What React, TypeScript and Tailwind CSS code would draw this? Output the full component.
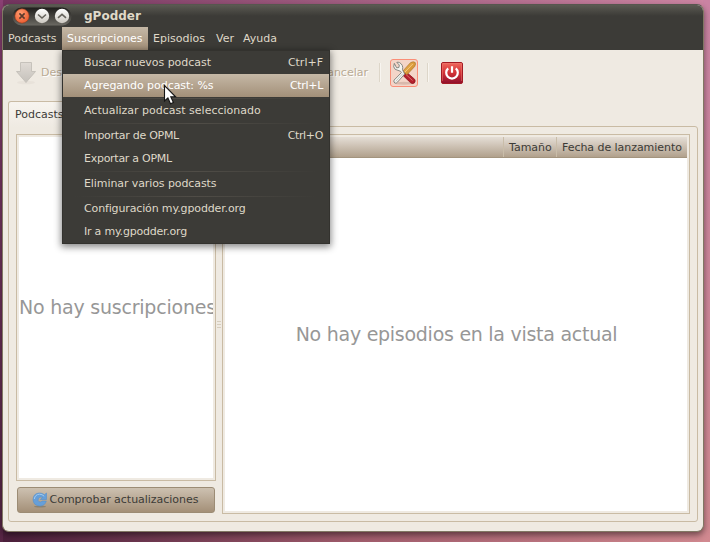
import type { ReactNode } from 'react';

function MenuTitle({ children, width, active = false }: { children: ReactNode; width: string; active?: boolean }) {
  return (
    <div
      className={`flex h-[23px] items-center px-[5px] ${width} ${
        active ? 'bg-linear-to-b from-[#c5b8a6] to-[#a39079] text-white' : 'text-[#dfd8c8]'
      }`}
    >
      {children}
    </div>
  );
}

type MenuItemProps = { label: string; shortcut?: string; active?: boolean; tracking?: string; shortcutTracking?: string };

function MenuItem({ label, shortcut, active = false, tracking = '', shortcutTracking = '' }: MenuItemProps) {
  return (
    <div
      className={`flex h-[23px] items-center justify-between pr-[6px] pl-[21px] ${
        active ? 'bg-linear-to-b from-[#c5b8a6] to-[#a39079] text-white' : 'text-[#dfd8c8]'
      }`}
    >
      <span className={tracking}>{label}</span>
      <span className={shortcutTracking}>{shortcut}</span>
    </div>
  );
}

function MenuSeparator() {
  return (
    <div className="h-[2px] pt-px">
      <div className="mx-3 h-px bg-linear-to-r from-transparent via-[#504d47] to-transparent" />
    </div>
  );
}

function WindowButtons() {
  return (
    <svg width="61" height="19" viewBox="0 0 61 19">
      <defs>
        <linearGradient id="pill" x1="0" y1="0" x2="0" y2="1">
          <stop offset="0" stopColor="#1e1d1b" />
          <stop offset="1" stopColor="#6c6a63" />
        </linearGradient>
        <linearGradient id="silver" x1="0" y1="0" x2="0" y2="1">
          <stop offset="0" stopColor="#ffffff" />
          <stop offset="1" stopColor="#cbc7bf" />
        </linearGradient>
        <radialGradient id="orange" cx=".4" cy=".3" r=".7">
          <stop offset="0" stopColor="#ff9c70" />
          <stop offset="1" stopColor="#ec5e32" />
        </radialGradient>
      </defs>
      <rect x="0.5" y="0.5" width="59" height="18" rx="9" fill="url(#pill)" />
      <circle cx="10" cy="9" r="7.2" fill="url(#orange)" stroke="#8a3a1e" strokeWidth=".6" />
      <circle cx="30" cy="9" r="7.2" fill="url(#silver)" />
      <circle cx="50" cy="9" r="7.2" fill="url(#silver)" />
      <path d="M7.4 6.4l5.2 5.2M12.6 6.4l-5.2 5.2" stroke="#5b3a2c" strokeWidth="1.6" />
      <path d="M26 7.5l4 3.5l4-3.5M46 10.8l4-3.5l4 3.5" fill="none" stroke="#65635c" strokeWidth="1.6" />
    </svg>
  );
}

function DownloadIcon() {
  return (
    <svg width="22" height="24" viewBox="0 0 22 24">
      <defs>
        <linearGradient id="arrow" x1="0" y1="0" x2="0" y2="1">
          <stop offset="0" stopColor="#e0dbd5" />
          <stop offset="1" stopColor="#c5c1bb" />
        </linearGradient>
      </defs>
      <ellipse cx="11" cy="21.5" rx="9" ry="1.8" fill="#e8e2da" />
      <path d="M5.5 1.5h11v9h4L11 21.5L1.5 10.5h4z" fill="url(#arrow)" stroke="#c6c2bb" />
    </svg>
  );
}

function ToolsIcon() {
  return (
    <svg width="26" height="26" viewBox="0 0 26 26">
      <defs>
        <linearGradient id="brush" x1="0" y1="0" x2="1" y2="1">
          <stop offset="0" stopColor="#f5bd60" />
          <stop offset="1" stopColor="#c47e1c" />
        </linearGradient>
      </defs>
      <ellipse cx="13" cy="23.2" rx="10" ry="1.5" fill="#d9b9ac" />
      <path d="M11.8 15.2l3.4-3.2l8.4 7.2q1.3 1.8-.2 3.7q-2.2 1.5-4.1-.4z" fill="#b5202c" stroke="#8b101c" strokeWidth=".8" />
      <path d="M15 14.5l6.5 6" stroke="#e0807a" strokeWidth=".8" />
      <path d="M11.7 11.2L19.6 2.6q2.8-1.5 4.6-.1q.9 1.8-.6 4.1L15.9 14.8z" fill="url(#brush)" stroke="#a9752a" strokeWidth=".7" />
      <path d="M14 12l7.8-8" stroke="#f9d494" strokeWidth=".8" />
      <path d="M3.3 3.4L2.7 6.8Q3.5 10 7 10.4l2.6.9l.8 1.3L3.1 20.1q-1 2.4 1.2 3q1.2.2 2.2-1l7.2-8.1l-2.2-4.2q1.1-5-3-7.2q-1.4-.7-2.7-.2L8.3 5l-.4 2.5L5.6 7.8z" fill="#f4f4f0" stroke="#7c7d76" strokeWidth=".9" strokeLinejoin="round" />
      <path d="M4.8 21.3l7-7.7" stroke="#c5c8c1" />
    </svg>
  );
}

function PowerIcon() {
  return (
    <svg width="22" height="22" viewBox="0 0 22 22">
      <defs>
        <linearGradient id="power" x1="0" y1="0" x2="0" y2="1">
          <stop offset="0" stopColor="#f06a5e" />
          <stop offset=".5" stopColor="#d23236" />
          <stop offset="1" stopColor="#8e0f2c" />
        </linearGradient>
      </defs>
      <rect x=".5" y=".5" width="21" height="21" rx="1.5" fill="url(#power)" stroke="#a31b25" />
      <path d="M1.5 19V1.5H20.5V19" fill="none" stroke="#ee7c70" strokeOpacity=".5" />
      <path d="M7.2 6.4a5.8 5.8 0 1 0 7.6 0" fill="none" stroke="white" strokeWidth="2.2" />
      <path d="M11 4.2v6.6" stroke="white" strokeWidth="2.2" />
    </svg>
  );
}

function RefreshIcon() {
  return (
    <svg width="16" height="16" viewBox="0 0 16 16">
      <ellipse cx="8" cy="14.6" rx="6" ry="1" fill="#8b8271" />
      <path d="M14.5 1v6.5H8.4l2.2-2.2Q7.8 4.6 6.4 6.4Q5.4 8.6 7 9.7Q8.8 10.5 10.2 9.1h4.1Q12.8 14 8 14Q1.3 13.6 1 7.5Q1.4 1.3 7.4 1q3.2 0 5 1.7z" fill="#669fd9" stroke="#5590cd" strokeWidth=".6" />
      <path d="M2.3 7Q3 2.5 7.5 2.2q2.7 0 4.7 2" fill="none" stroke="#a4cbee" />
    </svg>
  );
}

export default function App() {
  return (
    <div className="relative h-[542px] w-[710px] overflow-hidden bg-linear-to-r from-[#74345f] from-0% via-[#a35f82] via-50% to-[#cd86a3] to-100% pt-[4px] pl-[2px] font-['DejaVu_Sans',sans-serif] text-[11px] leading-[14px] text-[#3c3b37]">
      <div className="absolute inset-x-0 bottom-0 h-[18px] bg-linear-to-r from-[#4b1f3b] via-[#a15c6c] via-50% to-[#d18990]" />
      <div className="absolute top-0 left-0 h-[542px] w-[3px] bg-linear-to-b from-[#8a4073] to-[#572645]" />
      <div className="absolute top-0 right-0 h-[542px] w-[7px] bg-linear-to-b from-[#ca83a3] to-[#d18990]" />
      <div className="relative isolate flex h-[528px] w-[702px] flex-col overflow-hidden rounded-[7px] border border-[#817763] border-t-[#57564f] bg-[#efeae2] shadow-[0_3px_6px_0_#0007]">
        <header className="flex h-[22px] shrink-0 items-center bg-linear-to-b from-[#5b5a52] to-[#3c3b37] to-50% pl-[9px]">
          <WindowButtons />
          <h1 className="ml-[11px] text-[12px] font-bold text-[#dfd8c8]">gPodder</h1>
        </header>
        <nav className="flex h-[23px] shrink-0 bg-[#3c3b37]">
          <MenuTitle width="w-[59px]">Podcasts</MenuTitle>
          <MenuTitle width="w-[86px]" active>Suscripciones</MenuTitle>
          <MenuTitle width="w-[63px]">Episodios</MenuTitle>
          <MenuTitle width="w-[27px]">Ver</MenuTitle>
          <MenuTitle width="w-[43px]">Ayuda</MenuTitle>
        </nav>

        <div className="flex h-[45px] shrink-0 items-center pl-[12px] text-[#b9aa94] [text-shadow:1px_1px_0_white]">
          <DownloadIcon />
          <span className="ml-[4px] w-[220px]">Descargar</span>
          <span className="w-[107px] text-right">Cancelar</span>
          <div className="ml-[11px] h-[19px] w-[2px] border-l border-[#ddd6c9] bg-[#f8f5f0]" />
          <div className="ml-[9px] flex size-[28px] items-center justify-center rounded-[3px] border border-[#fa8e77] bg-[#f4d5c8]">
            <ToolsIcon />
          </div>
          <div className="ml-[9px] h-[19px] w-[2px] border-l border-[#ddd6c9] bg-[#f8f5f0]" />
          <div className="ml-[12px]"><PowerIcon /></div>
        </div>

        <main className="flex min-h-0 flex-1 flex-col px-[5px] pt-[6px] pb-[9px]">
          <div className="z-10 -mb-px flex h-[26px] w-[90px] shrink-0 items-center rounded-t-[3px] border border-b-0 border-[#c9bba4] bg-linear-to-b from-[#f7f4ef] to-[#efeae2] pl-[6px]">
            Podcasts
          </div>
          <div className="flex min-h-0 flex-1 gap-[6px] rounded-[3px] rounded-tl-none border border-[#c9bba4] p-[7px]">
            <aside className="flex w-[200px] flex-col">
              <div className="flex h-[347px] flex-col justify-center border border-[#c9bba4] bg-[#efeae2] p-[2px]">
                <div className="flex h-full items-center overflow-hidden bg-white pb-[2px] text-[19px] tracking-[-0.22px] whitespace-nowrap text-[#979797]">
                  No hay suscripciones
                </div>
              </div>
              <button className="mx-[1px] mt-[6px] flex h-[26px] items-center justify-center gap-[2px] rounded-[3px] border border-[#9c8c75] bg-linear-to-b from-[#cdc1b1] to-[#a49078] pr-[2px] tracking-[-0.03px]">
                <RefreshIcon />
                Comprobar actualizaciones
              </button>
            </aside>
            <section className="relative flex h-[380px] w-[468px] flex-col border border-[#c9bba4] bg-[#efeae2] p-[2px]">
              <div className="absolute top-[186px] -left-[6px] flex w-[4px] flex-col gap-[2px]">
                <div className="h-px bg-[#d6cdbd]" />
                <div className="h-px bg-[#d6cdbd]" />
                <div className="h-px bg-[#d6cdbd]" />
              </div>
              <div className="flex h-[21px] shrink-0 items-center justify-end border-b border-[#a3947e] bg-linear-to-b from-[#e5ded6] to-[#b1a18d]">
                <div className="flex h-full w-[53px] items-center border-l border-[#c9bda9] pt-[1px] pl-[5px]">Tamaño</div>
                <div className="flex h-full w-[131px] items-center border-l border-[#c9bda9] pt-[1px] pl-[5px] tracking-[-0.05px] whitespace-nowrap">Fecha de lanzamiento</div>
              </div>
              <div className="flex flex-1 items-center justify-center bg-white pb-[2px] pl-[1px] text-[19px] tracking-[-0.27px] text-[#979797]">
                No hay episodios en la vista actual
              </div>
            </section>
          </div>
        </main>
      </div>

      <div className="absolute top-[50px] left-[62px] z-20 h-[194px] w-[268px] border border-[#33322e] bg-[#3c3b37] shadow-[0_2px_7px_1px_#0007]">
        <MenuItem label="Buscar nuevos podcast" shortcut="Ctrl+F" tracking="tracking-[-0.04px]" />
        <MenuItem label="Agregando podcast: %s" shortcut="Ctrl+L" active tracking="tracking-[-0.04px]" shortcutTracking="tracking-[-0.3px]" />
        <MenuSeparator />
        <MenuItem label="Actualizar podcast seleccionado" />
        <MenuSeparator />
        <MenuItem label="Importar de OPML" shortcut="Ctrl+O" tracking="tracking-[-0.28px]" shortcutTracking="tracking-[-0.35px]" />
        <MenuItem label="Exportar a OPML" tracking="tracking-[-0.27px]" />
        <MenuSeparator />
        <MenuItem label="Eliminar varios podcasts" tracking="tracking-[-0.09px]" />
        <MenuSeparator />
        <MenuItem label="Configuración my.gpodder.org" tracking="tracking-[-0.14px]" />
        <MenuItem label="Ir a my.gpodder.org" tracking="tracking-[-0.22px]" />
      </div>
      <svg className="absolute top-[84px] left-[163px] z-30" width="14" height="22" viewBox="0 0 14 22">
        <path d="M1.5 1.5v15.5l3.4-3l2.6 5.8l2.9-1.3l-2.6-5.7h4.8z" fill="white" stroke="#151515" strokeWidth="1.1" />
      </svg>
    </div>
  );
}
